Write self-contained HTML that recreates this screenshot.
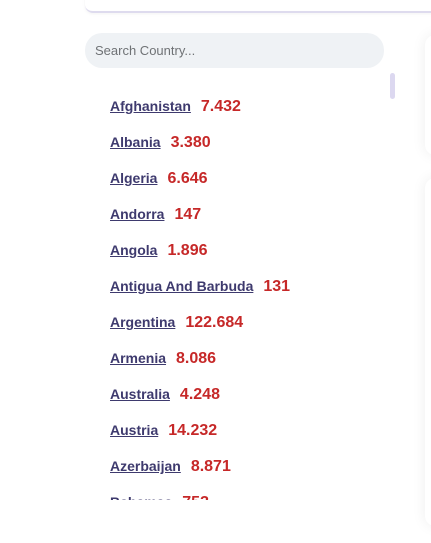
<!DOCTYPE html>
<html><head><style>
body{margin:0;width:431px;height:543px;background:#fff;position:relative;overflow:hidden;font-family:"Liberation Sans",sans-serif}
.top{position:absolute;left:85px;top:-20px;width:400px;height:31px;border-bottom:2px solid #dedbee;border-radius:0 0 0 8px;box-shadow:0 1px 3px rgba(0,0,0,.05)}
.search{position:absolute;left:85px;top:33px;width:299px;height:35px;border-radius:17px;background:#eff2f5;font-size:13px;color:#6f7275;line-height:35px;padding-left:10px;box-sizing:border-box}
.thumb{position:absolute;left:390px;top:73px;width:5px;height:26px;border-radius:3px;background:#dcd8f0}
.card{position:absolute;left:425px;width:40px;background:#fff;border-radius:10px;box-shadow:0 0 14px rgba(0,0,0,.07)}
.list{position:absolute;left:110px;top:88px;height:412px;width:270px;overflow:hidden}
.row{height:36px;line-height:36px;white-space:nowrap}
.row a{font-size:14px;font-weight:bold;color:#3e3a6e;text-decoration:underline}
.row b{font-size:16px;color:#c62828;margin-left:10px}
</style></head><body>
<div class="top"></div>
<div class="search">Search Country...</div>
<div class="thumb"></div>
<div class="card" style="top:35px;height:120px"></div>
<div class="card" style="top:178px;height:348px"></div>
<div class="list">
<div class="row"><a>Afghanistan</a><b>7.432</b></div>
<div class="row"><a>Albania</a><b>3.380</b></div>
<div class="row"><a>Algeria</a><b>6.646</b></div>
<div class="row"><a>Andorra</a><b>147</b></div>
<div class="row"><a>Angola</a><b>1.896</b></div>
<div class="row"><a>Antigua And Barbuda</a><b>131</b></div>
<div class="row"><a>Argentina</a><b>122.684</b></div>
<div class="row"><a>Armenia</a><b>8.086</b></div>
<div class="row"><a>Australia</a><b>4.248</b></div>
<div class="row"><a>Austria</a><b>14.232</b></div>
<div class="row"><a>Azerbaijan</a><b>8.871</b></div>
<div class="row"><a>Bahamas</a><b>753</b></div>
</div>
</body></html>
